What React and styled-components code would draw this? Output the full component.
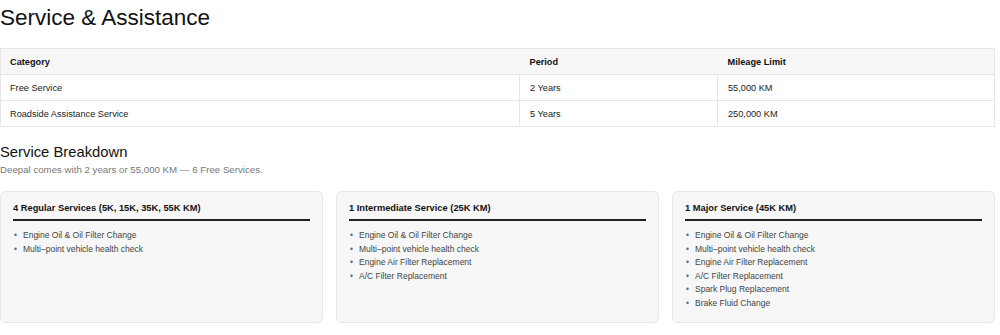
import styled, { createGlobalStyle } from 'styled-components'

const GlobalStyle = createGlobalStyle`
  *{
    box-sizing: border-box;
    margin: 0;
    padding: 0;
  }
  body{
    background: #fff;
    font-family: "Liberation Sans", Arial, sans-serif;
    color: #111;
  }
`

const Page = styled.main`
  width: 995px;
  padding-top: 5px;
`

const Title = styled.h1`
  font-size: 22.5px;
  font-weight: 400;
  line-height: 26px;
  color: #111;
  margin-bottom: 17px;
`

const Table = styled.table`
  width: 100%;
  border-collapse: collapse;
  font-size: 9.2px;
  border: 1px solid #e6e6e6;
`

const Th = styled.th`
  text-align: left;
  font-weight: 700;
  background: #f7f7f7;
  height: 26px;
  padding: 0 10px 0 ${p => (p.$first ? '9px' : '10px')};
  border-bottom: 1px solid #e6e6e6;
  width: ${p => p.$w || 'auto'};
`

const Td = styled.td`
  height: 26px;
  padding: 0 10px 0 ${p => (p.$first ? '9px' : '10px')};
  color: #222;
  border-bottom: 1px solid #e6e6e6;
  border-left: ${p => (p.$first ? 'none' : '1px solid #e6e6e6')};
`

const SubTitle = styled.h2`
  font-size: 14.8px;
  font-weight: 400;
  line-height: 17px;
  margin-top: 17px;
`

const Lead = styled.p`
  font-size: 9.7px;
  color: #777;
  line-height: 13px;
  margin-top: 2px;
`

const Cards = styled.div`
  display: grid;
  grid-template-columns: repeat(3, 1fr);
  gap: 13px;
  margin-top: 15px;
`

const Card = styled.section`
  background: #f7f7f7;
  border: 1px solid #e8e8e8;
  border-radius: 5px;
  padding: 10px 12px 12px;
  min-height: 131px;
`

const CardTitle = styled.h3`
  font-size: 9.3px;
  font-weight: 700;
  line-height: 12px;
  padding-bottom: 5px;
  border-bottom: 2px solid #222;
  margin-bottom: 8px;
`

const List = styled.ul`
  list-style: none;
`

const Item = styled.li`
  font-size: 8.5px;
  line-height: 13.5px;
  color: #444;
  padding-left: 10px;
  position: relative;

  &::before{
    content: "•";
    position: absolute;
    left: 1px;
    color: #666;
  }
`

const rows = [
  ['Free Service', '2 Years', '55,000 KM'],
  ['Roadside Assistance Service', '5 Years', '250,000 KM'],
]

const services = [
  {
    title: '4 Regular Services (5K, 15K, 35K, 55K KM)',
    items: ['Engine Oil & Oil Filter Change', 'Multi\u2013point vehicle health check'],
  },
  {
    title: '1 Intermediate Service (25K KM)',
    items: [
      'Engine Oil & Oil Filter Change',
      'Multi\u2013point vehicle health check',
      'Engine Air Filter Replacement',
      'A/C Filter Replacement',
    ],
  },
  {
    title: '1 Major Service (45K KM)',
    items: [
      'Engine Oil & Oil Filter Change',
      'Multi\u2013point vehicle health check',
      'Engine Air Filter Replacement',
      'A/C Filter Replacement',
      'Spark Plug Replacement',
      'Brake Fluid Change',
    ],
  },
]

function App() {
  return (
    <>
      <GlobalStyle />
      <Page>
        <Title>Service &amp; Assistance</Title>
        <Table>
          <thead>
            <tr>
              <Th $first $w="519px">Category</Th>
              <Th $w="198px">Period</Th>
              <Th>Mileage Limit</Th>
            </tr>
          </thead>
          <tbody>
            {rows.map((r) => (
              <tr key={r[0]}>
                <Td $first>{r[0]}</Td>
                <Td>{r[1]}</Td>
                <Td>{r[2]}</Td>
              </tr>
            ))}
          </tbody>
        </Table>

        <SubTitle>Service Breakdown</SubTitle>
        <Lead>Deepal comes with 2 years or 55,000 KM — 6 Free Services.</Lead>

        <Cards>
          {services.map((s) => (
            <Card key={s.title}>
              <CardTitle>{s.title}</CardTitle>
              <List>
                {s.items.map((it) => (
                  <Item key={it}>{it}</Item>
                ))}
              </List>
            </Card>
          ))}
        </Cards>
      </Page>
    </>
  )
}

export default App
